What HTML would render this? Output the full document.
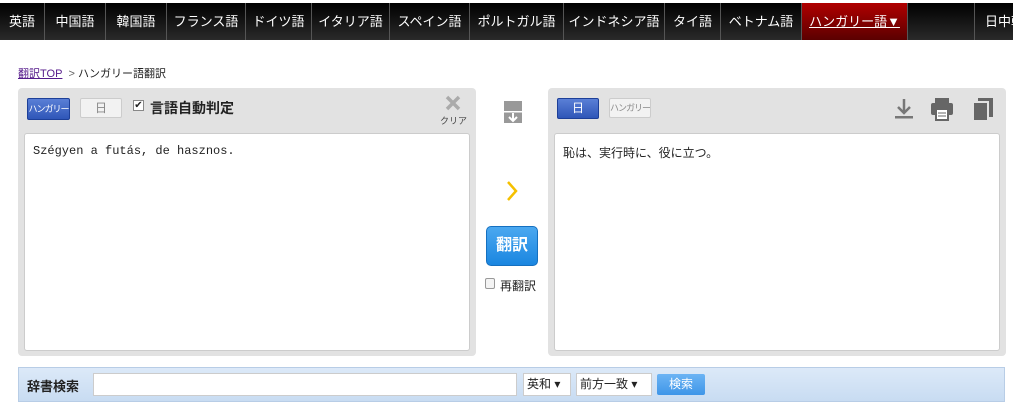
<!DOCTYPE html>
<html><head><meta charset="utf-8"><style>
*{box-sizing:border-box;margin:0;padding:0}
body{width:1013px;height:410px;background:#fff;font-family:"Liberation Sans","Noto Sans CJK JP",sans-serif;font-size:13px;position:relative;overflow:hidden;color:#222}
.nav{position:absolute;left:0;top:3px;width:1013px;height:37px;background:linear-gradient(#000,#2a2a2a);display:flex}
.nav div{color:#fff;font-size:13px;line-height:37px;text-align:center;border-right:1px solid #555;flex:none;white-space:nowrap;overflow:hidden}
.nav .act{background:linear-gradient(#b00000,#5a0000);text-decoration:underline}
.bc{position:absolute;left:18px;top:65px;font-size:11px}
.bc a{color:#551a8b;text-decoration:underline}
.panel{position:absolute;top:88px;height:268px;background:#e2e2e2;border-radius:4px}
.ta{position:absolute;background:#fff;border:1px solid #ccc;border-radius:3px;font-family:"Liberation Mono","Noto Sans CJK JP",monospace;font-size:12px;padding:10px 8px}
.btn{position:absolute;font-size:11px;text-align:center;border-radius:2px;white-space:nowrap;overflow:hidden}
.blue{background:linear-gradient(#5a7fd6,#2f56b8);color:#fff;border:1px solid #1d3f98}
.gray{background:#f2f2f2;color:#888;border:1px solid #ccc}
.bar{position:absolute;left:18px;top:367px;width:987px;height:35px;background:linear-gradient(#dce9f8,#c8dcf2);border:1px solid #b8cde6}
.sm{font-size:9px;letter-spacing:-1px}
</style></head><body>
<div class="nav">
<div style="width:45px">英語</div><div style="width:61px">中国語</div><div style="width:61px">韓国語</div><div style="width:79px">フランス語</div><div style="width:66px">ドイツ語</div><div style="width:78px">イタリア語</div><div style="width:80px">スペイン語</div><div style="width:94px">ポルトガル語</div><div style="width:101px">インドネシア語</div><div style="width:56px">タイ語</div><div style="width:81px">ベトナム語</div><div class="act" style="width:106px">ハンガリー語▼</div><div style="width:67px"></div><div style="width:38px;border:none;text-align:left;padding-left:10px">日中韓</div>
</div>
<div class="bc"><a>翻訳TOP</a>&nbsp; <span style="color:#666">&gt;</span> ハンガリー語翻訳</div>

<div class="panel" style="left:18px;width:458px">
 <div class="btn blue sm" style="left:9px;top:10px;width:43px;height:22px;line-height:20px">ハンガリー</div>
 <div class="btn gray" style="left:62px;top:10px;width:42px;height:20px;line-height:18px;font-size:12px">日</div>
 <div style="position:absolute;left:115px;top:12px;width:11px;height:11px;border:1px solid #888;background:#fff;font-size:10px;line-height:9px;text-align:center">✔</div>
 <div style="position:absolute;left:132px;top:10px;font-size:14px;font-weight:bold;color:#222">言語自動判定</div>
 <svg style="position:absolute;left:427px;top:7px" width="16" height="16"><path d="M2 2L14 14M14 2L2 14" stroke="#aaa" stroke-width="3.5"/></svg>
 <div style="position:absolute;left:422px;top:26px;font-size:9px;color:#444">クリア</div>
 <div class="ta" style="left:6px;top:45px;width:446px;height:218px">Szégyen a futás, de hasznos.</div>
</div>

<svg style="position:absolute;left:504px;top:101px" width="18" height="22"><rect width="18" height="22" fill="#999"/><rect y="10" width="18" height="1.5" fill="#fff"/><path d="M9 12v8M5 16l4 4 4-4" stroke="#fff" stroke-width="2" fill="none"/></svg>
<svg style="position:absolute;left:506px;top:180px" width="12" height="22"><path d="M2 2L10 11L2 20" stroke="#f5c000" stroke-width="2.5" fill="none"/></svg>
<div style="position:absolute;left:486px;top:226px;width:52px;height:40px;border-radius:5px;background:linear-gradient(#4ba8f0,#1a86e0);border:1px solid #1570c0;color:#fff;font-size:16px;font-weight:bold;text-align:center;line-height:38px">翻訳</div>
<div style="position:absolute;left:485px;top:278px;width:10px;height:11px;border:1px solid #999;border-radius:2px;background:#f4f4f4"></div>
<div style="position:absolute;left:500px;top:277px;font-size:12px">再翻訳</div>

<div class="panel" style="left:548px;width:458px">
 <div class="btn blue" style="left:9px;top:10px;width:42px;height:21px;line-height:19px;font-size:12px">日</div>
 <div class="btn gray sm" style="left:61px;top:10px;width:42px;height:20px;line-height:18px">ハンガリー</div>
 <svg style="position:absolute;left:346px;top:10px" width="20" height="22"><path d="M10 1v14M4 9l6 6 6-6" stroke="#777" stroke-width="2.5" fill="none"/><rect x="1" y="18" width="18" height="2.5" fill="#777"/></svg>
 <svg style="position:absolute;left:382px;top:9px" width="24" height="24"><rect x="5" y="1" width="14" height="5" fill="#666"/><rect x="1" y="6" width="22" height="12" rx="2" fill="#666"/><rect x="6" y="12" width="12" height="11" fill="#fff" stroke="#666" stroke-width="2"/><path d="M8 16h8M8 19h8" stroke="#666"/></svg>
 <svg style="position:absolute;left:424px;top:9px" width="22" height="24"><rect x="6" y="1" width="15" height="19" fill="#666"/><rect x="1" y="5" width="15" height="19" fill="#666" stroke="#e2e2e2" stroke-width="2"/></svg>
 <div class="ta" style="left:6px;top:45px;width:446px;height:218px">恥は、実行時に、役に立つ。</div>
</div>

<div class="bar">
 <div style="position:absolute;left:8px;top:8px;font-weight:bold;font-size:13px">辞書検索</div>
 <div style="position:absolute;left:74px;top:5px;width:424px;height:23px;background:#fff;border:1px solid #ccc"></div>
 <div style="position:absolute;left:504px;top:5px;width:48px;height:23px;background:#fff;border:1px solid #ccc;font-size:12px;line-height:21px;padding-left:3px">英和 ▾</div>
 <div style="position:absolute;left:557px;top:5px;width:76px;height:23px;background:#fff;border:1px solid #ccc;font-size:12px;line-height:21px;padding-left:3px">前方一致 ▾</div>
 <div style="position:absolute;left:638px;top:6px;width:48px;height:21px;background:linear-gradient(#6cb4f4,#3f96e8);border-radius:2px;color:#fff;font-size:12px;text-align:center;line-height:21px">検索</div>
</div>
</body></html>
